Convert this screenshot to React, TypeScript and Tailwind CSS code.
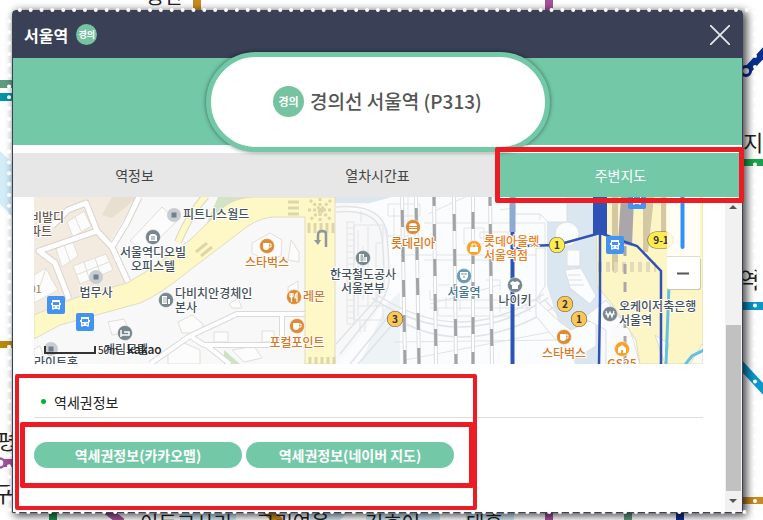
import { useState } from "react"
import type { ReactNode } from "react"

const FONT =
  "font-['Noto_Sans_CJK_KR','Noto_Sans',sans-serif]"

const TABS = [
  { id: "info", nome: "역정보" },
  { id: "time", nome: "열차시간표" },
  { id: "map", nome: "주변지도" },
]

const LINKS = [
  "역세권정보(카카오맵)",
  "역세권정보(네이버 지도)",
]

const TRILHOS = [
  [402, 405, 22],
  [416, 419, 24],
  [434, 436, 8],
  [454, 456, 18],
  [473, 473, 20],
  [490, 492, 8],
]

/* LINE MAP BEHIND THE POPUP */
function LineMap() {
  return (
    <svg
      className="absolute top-0 left-0"
      width="763"
      height="520"
      viewBox="0 0 763 520"
      fill="#222"
      fontSize="18"
      aria-hidden="true"
    >
      <rect x="193" y="0" width="8" height="12" fill="#c98b1e" />
      <rect x="545" y="0" width="8" height="12" fill="#a2529b" />
      <text x="146" y="4" fontSize="20">용산</text>

      <path d="M0 151L14 164V218L0 204Z" fill="#d2ecf8" />
      <rect x="0" y="80" width="14" height="8" fill="#5f9b80" />
      <rect x="0" y="93" width="14" height="8" fill="#0593a7" />
      <rect x="0" y="341" width="14" height="7" fill="#b9870c" />
      <text x="-3" y="449" fontSize="21">평</text>
      <path d="M0 463H14" stroke="#a2529b" strokeWidth="8" />
      <circle cx="0" cy="463" r="4.500" fill="#fff" stroke="#a2529b" strokeWidth="2.500" />
      <text x="-7" y="502" fontSize="22">구</text>

      <path d="M744 74L766 50" stroke="#0a2e90" strokeWidth="8" />
      <circle cx="746" cy="71" r="4.500" fill="#fff" stroke="#0a2e90" strokeWidth="3" />
      <text x="743" y="151" fontSize="22">지도</text>
      <rect x="740" y="159" width="23" height="7" fill="#17a54a" />
      <text x="739" y="288" fontSize="22">역</text>
      <rect x="740" y="302" width="23" height="8" fill="#0b97cb" />
      <path d="M740 364L766 392" stroke="#0b97cb" strokeWidth="8" />
      <rect x="740" y="497" width="23" height="7" fill="#c98b1e" />

      <path d="M180 510H236V520H180ZM310 510H350L340 520H310ZM366 510H440V520H366ZM466 510H514V520H466Z" fill="#cfe8f3" />
      <rect x="49" y="510" width="8" height="10" fill="#1e8e49" />
      <path d="M106 510L122 522" stroke="#a2529b" strokeWidth="8" />
      <path d="M266 510L280 522" stroke="#c98b1e" strokeWidth="9" />
      <rect x="545" y="510" width="8" height="10" fill="#a2529b" />
      <rect x="624" y="510" width="8" height="10" fill="#5f9b80" />
      <rect x="676" y="510" width="8" height="10" fill="#0a2e90" />
      <text x="140" y="531" fontSize="20">이득교사리</text>
      <text x="256" y="530" fontSize="20">그리여웅</text>
      <text x="365" y="531" fontSize="20">김호어</text>
      <text x="466" y="531" fontSize="20">대흥</text>
    </svg>
  )
}

function Bus({ x, y }: { x: number; y: number }) {
  return (
    <g transform={`translate(${x} ${y})`}>
      <rect x="-9" y="-9" width="18" height="18" rx="2" fill="#4294f0" />
      <path d="M-4 -5H4V4H-4Z" fill="#fff" />
      <path d="M-3 -3H3V0H-3Z" fill="#4294f0" />
      <path d="M-4.500 -2V0M4.500 -2V0M-3 4V5M3 4V5" stroke="#fff" />
      <path d="M-3 2H-1M1 2H3" stroke="#4294f0" />
    </g>
  )
}

function Pin({
  x,
  y,
  cor = "#78868d",
  children,
}: {
  x: number
  y: number
  cor?: string
  children?: ReactNode
}) {
  return (
    <g transform={`translate(${x} ${y})`}>
      <circle r="7.500" fill={cor} stroke="#fff" strokeWidth="0.500" />
      {children}
    </g>
  )
}

function Ponto({ x, y }: { x: number; y: number }) {
  return (
    <g transform={`translate(${x} ${y})`}>
      <circle r="7" fill="#c9ccd2" />
      <rect x="-2.500" y="-2.500" width="5" height="5" fill="#71808a" />
    </g>
  )
}

function Copo() {
  return (
    <g>
      <path d="M-4 -3H2V1Q2 4 -1 4Q-4 4 -4 1Z" fill="#fff" />
      <path d="M2 -2H4V1H2" fill="none" stroke="#fff" />
    </g>
  )
}

function Saida({
  x,
  y,
  n,
  cor = "#fcc755",
}: {
  x: number
  y: number
  n: string
  cor?: string
}) {
  return (
    <g>
      <circle cx={x} cy={y} r="7.500" fill={cor} stroke="#6b6146" strokeWidth="1.200" />
      <text x={x} y={y + 4} textAnchor="middle" fontSize="10" fontWeight="700" fill="#333" strokeWidth="0">
        {n}
      </text>
    </g>
  )
}

/* MAP AROUND THE STATION */
function StationMap() {
  return (
    <svg
      className="block h-[167px] w-full"
      viewBox="34 197 669 167"
      preserveAspectRatio="xMidYMid slice"
      role="img"
      aria-label="주변지도"
    >
      <rect x="34" y="197" width="669" height="167" fill="#f8f8f9" />

      {/* blocks */}
      <path d="M34 197H138L110 242L130 284L70 301L34 316Z" fill="#f3ebe0" />
      <path d="M102 215L112 197H138L122 210L112 218Z" fill="#e9dfd0" />
      <path d="M204 230L218 197H258L236 205Z" fill="#d3e4c6" />
      <path d="M224 350L240 364H224Z" fill="#cfe3c3" />
      <path d="M335 197H392V246L380 212L366 203H335Z" fill="#dbe7ef" />
      <g fill="#fcfcfc" stroke="#e4ded6">
        <path d="M67 222L84 211L91 226L73 237ZM56 249L72 240L78 256L62 267ZM73 266L106 254L113 270L80 284ZM84 262L90 281M95 258L101 276M76 275L109 262M34 275L46 268L52 280L58 290L34 303Z" />
        <path d="M75 217L81 231M64 245L70 261M46 268L38 292" />
        <path d="M130 241L162 207L177 221L145 252Z" />
        <path d="M252 243L270 233L282 240L281 256L263 259L252 253ZM291 240L299 252V262L288 260ZM288 287L298 281V300H288Z" />
        <path d="M178 322L192 315L203 324V333H182ZM214 332H228V342H214ZM262 331H274V342H262ZM229 304L238 298L242 308L232 308ZM108 322L124 319L130 332L112 335Z" />
        <path d="M34 349L40 346L46 364H34ZM168 352L182 342L200 350V364H168ZM232 350L254 346L262 358L244 362Z" />
      </g>

      {/* side roads */}
      <g fill="none" strokeLinejoin="round">
        <path d="M52 226L68 210L86 203L97 231L39 251L55 263L69 299M97 231L112 247L128 282M112 247L126 224L139 197" stroke="#d8d4ce" strokeWidth="7" />
        <path d="M52 226L68 210L86 203L97 231L39 251L55 263L69 299M97 231L112 247L128 282M112 247L126 224L139 197" stroke="#fff" strokeWidth="5" />
        <path d="M150 364L190 336L237 314H307M190 336L204 345H307M282 314V345M206 345L230 364" stroke="#d9dadd" strokeWidth="6" />
        <path d="M150 364L190 336L237 314H307M190 336L204 345H307M282 314V345M206 345L230 364" stroke="#fff" strokeWidth="4" />
        <path d="M178 242Q192 210 206 196" stroke="#dad8c0" strokeWidth="8" />
        <path d="M178 242Q192 210 206 196" stroke="#fdf8c6" strokeWidth="6" />
      </g>

      {/* main roads */}
      <path
        d="M34 315L75 298L127 283Q160 264 190 240L225 206Q236 198 252 197H335V364H305V217H275Q262 217 248 226L190 270Q158 296 140 303L60 325L34 339Z"
        fill="#fdf8c6"
        stroke="#e0dcc0"
      />
      <g stroke="#ded6ab" strokeWidth="3" fill="none">
        <path d="M288 202H299M288 208H299M288 214H299M309 223V233M315 223V233M321 223V233M327 223V233M333 223V233" />
        <path d="M310 200L331 220M331 200L310 220M308 210H333M320 198V222" strokeDasharray="3 2" />
        <path d="M310 357V364M316 357V364M322 357V364M328 357V364M334 357V364" />
        <path d="M196 252L207 243M201 256L212 247" />
      </g>
      <path d="M326 247V234Q326 231 322 231Q318 231 318 235V241" fill="none" stroke="#92969a" strokeWidth="2.500" />
      <path d="M314 240H321L318 245Z" fill="#92969a" />

      {/* rail yard */}
      <path d="M336 212Q382 203 389 236V284Q386 310 336 364H600V197H392Z" fill="#fbfcfd" />
      <path d="M505 197H600V364H575L558 320L547 286V218Z" fill="#dbe7f0" />
      <path d="M505 197H547V286L512 300Z" fill="#fbfcfd" />
      <path d="M386 305L400 292V364H360Z" fill="#eef3f6" />
      <g fill="none" stroke="#e1e4e7">
        <path d="M336 207Q372 204 383 222Q389 232 389 282Q387 296 375 310L340 354M336 212Q370 209 379 226Q384 236 384 284Q382 294 372 304L336 344M350 364L392 312M358 364L400 316" strokeWidth="1.500" />
        <path d="M347 222H354V324H347ZM347 228H354M347 234H354M347 240H354M347 246H354M347 252H354M347 258H354M347 264H354M347 270H354M347 276H354M347 282H354M347 288H354M347 294H354M347 300H354M347 306H354M347 312H354M347 318H354" />
        <path d="M354 225H383V243H376V306H383V320H354ZM358 230V316M368 226V306M363 246V300M358 306H378M360 320V332M365 320V332M361 211V222" />
        <path d="M388 204H420V216H388ZM394 208V238M408 197V236H388M424 223H545V250M424 260H500M430 290V300H540V280M430 308H530V300M438 308V316H520M464 228H484V244H464Z" />
        <path d="M428 214L476 192M430 304L500 285M394 342L560 340M400 255H540M405 360L560 330M500 210L540 204V220" />
        <path d="M372 298Q460 356 548 298M376 294Q460 350 544 294M398 320Q470 360 556 306M545 300L590 350M550 296L596 342" strokeWidth="1.500" />
        <path d="M446 297V308M460 300V311M500 300V312M524 302L530 312M438 285H450M480 232H508V238H480ZM486 280H500V290" />
      </g>
      {TRILHOS.map(([x1, x2, off]) => (
        <g key={x1} fill="none">
          <path d={`M${x1} 197L${x2} 364`} stroke="#dcdee0" strokeWidth="4" />
          <path d={`M${x1} 197L${x2} 364`} stroke="#fff" strokeWidth="2" />
          <path
            d={`M${x1} 197L${x2} 364`}
            stroke="#a2a3a5"
            strokeWidth="3"
            strokeDasharray="17 18"
            strokeDashoffset={off}
          />
        </g>
      ))}

      {/* square in front of the station */}
      <g fill="#fbfcfd" stroke="#dcdfe2">
        <path d="M515 197H567V222H548L540 214H515ZM567 250H580V266H567ZM565 270L581 268L596 296L590 304L570 288ZM568 275H580M568 280H582M568 285H584" />
        <circle cx="567" cy="234" r="12" />
        <path d="M545 248V286L536 300L560 322L571 330L596 318V346L580 356L556 340L536 316V248Z" />
        <path d="M584 318L606 300L630 330L640 364H606V330Z" />
      </g>

      {/* avenue on the right */}
      <path d="M596 197H703V364H640L636 340L612 304L597 286Z" fill="#fcf6c6" stroke="#e3dcb8" />
      <path d="M611 326V364H638L633 340L622 322Z" fill="#fafafa" />
      <path d="M655 335L669 344L665 364ZM690 364L703 343V364Z" fill="#fbfbfb" stroke="#e3dcb8" />
      <g fill="#d3c8a2">
        <path d="M612 197H618V270Q615 276 612 270ZM643 197H654L648 252H643ZM661 197H666V246H661Z" />
      </g>
      <path d="M621 197H634L632 246L618 243Z" fill="#aaa6a9" />
      <path d="M598 267H656" stroke="#e2dab8" strokeWidth="10" strokeDasharray="4 4" />
      <path d="M625 246V364" stroke="#aaa6a9" strokeWidth="3" strokeDasharray="10 8" />
      <path d="M669 285L666 364M684 366L692 356L704 350" fill="none" stroke="#63c1e6" strokeWidth="3" />

      {/* subway lines */}
      <g fill="none" stroke="#2f52b8">
        <path d="M512.500 197V232" stroke="#8ea9d2" strokeWidth="6" />
        <path d="M512.500 232V364" strokeWidth="4" />
        <path d="M512 250L524 246L557 245L600 233L637 246L661 271V364M600 233V300L599 364" strokeWidth="2.500" />
        <path d="M600 197V234" strokeWidth="14" />
      </g>

      <Bus x={56} y={305} />
      <Bus x={85} y={322} />
      <Bus x={615} y={245} />
      <Bus x={637} y={200} />

      {/* places */}
      <Ponto x={174} y={215} />
      <Ponto x={96} y={277} />
      <Ponto x={51} y={349} />
      <Pin x={153} y={237}>
        <path d="M-4 4V-1L-2 -3H2L4 -1V4Z" fill="#fff" />
        <path d="M-2 0H2M-2 2H2" stroke="#78868d" />
      </Pin>
      <Pin x={166} y={300}>
        <path d="M-4 4V-4H1V4ZM2 4V-1H4V4Z" fill="#fff" />
        <path d="M-2 -3V3M0 -3V3" stroke="#78868d" strokeWidth="0.700" />
      </Pin>
      <Pin x={125} y={333}>
        <path d="M-4 -3V4M-4 2H4V-1H-1" fill="none" stroke="#fff" strokeWidth="1.500" />
      </Pin>
      <Pin x={267} y={246} cor="#dd8c35"><Copo /></Pin>
      <Pin x={294} y={297} cor="#dd8c35">
        <path d="M-4 -4V-1Q-4 0 -2.500 0Q-1 0 -1 -1V-4M-2.500 -4V5M3 5V-4Q1 -3 1 1H3" fill="none" stroke="#fff" strokeWidth="1.200" />
      </Pin>
      <Pin x={297} y={326} cor="#dd8c35"><Copo /></Pin>
      <Pin x={363} y={258}>
        <path d="M-4 4V-4H1V-1H4V4Z" fill="#fff" />
        <path d="M-3 -2H0M-3 0H3M-3 2H3M-1 -4V4" stroke="#78868d" strokeWidth="0.700" />
      </Pin>
      <Pin x={413} y={227} cor="#dd8c35">
        <path d="M-4 -1Q-4 -4 0 -4Q4 -4 4 -1ZM-4 0H4V1H-4ZM-4 2H4V4H-4Z" fill="#fff" />
      </Pin>
      <Pin x={474} y={248} cor="#f5a32d">
        <path d="M-4 -1H4V4H-4Z" fill="#fff" />
        <path d="M-2 -1V-4H2V-1" fill="none" stroke="#fff" />
      </Pin>
      <Pin x={464} y={276} cor="#6a9db4">
        <path d="M-4 -4H4V1L2 4H-2L-4 1Z" fill="#fff" />
        <path d="M-3 -2H3M-1 1H1" stroke="#6a9db4" />
      </Pin>
      <Pin x={515} y={285}>
        <path d="M-2 -4Q0 -2 2 -4L5 -2L4 0L3 0V4H-3V0H-4L-5 -2Z" fill="#fff" />
      </Pin>
      <Pin x={564} y={337} cor="#dd8c35"><Copo /></Pin>
      <Pin x={610} y={314}>
        <path d="M-4 -3L-2 3L0 -2L2 3L4 -3M-5 0H5" fill="none" stroke="#fff" strokeWidth="1.200" />
      </Pin>
      <Pin x={622} y={349} cor="#f5a32d">
        <path d="M-4 4V-1L0 -4L4 -1V4H1V1H-1V4Z" fill="#fff" />
      </Pin>

      {/* labels */}
      <g
        fontSize="12"
        fontWeight="500"
        stroke="#fff"
        strokeWidth="2"
        paintOrder="stroke"
        strokeLinejoin="round"
        fill="#45525b"
      >
        <text x="31" y="222" fill="#6b5a50">비발디</text>
        <text x="30" y="236" fill="#6b5a50">파트</text>
        <text x="30" y="293" fontSize="10" fill="#a58a5a">01</text>
        <text x="183" y="219">피트니스월드</text>
        <text x="153" y="257" textAnchor="middle">서울역디오빌</text>
        <text x="153" y="271" textAnchor="middle">오피스텔</text>
        <text x="96" y="297" textAnchor="middle">법무사</text>
        <text x="175" y="298">다비치안경체인</text>
        <text x="175" y="312">본사</text>
        <text x="126" y="354" textAnchor="middle">계림모텔</text>
        <text x="34" y="367">라이트홈</text>
        <text x="363" y="279" textAnchor="middle">한국철도공사</text>
        <text x="363" y="293" textAnchor="middle">서울본부</text>
        <text x="515" y="305" textAnchor="middle">나이키</text>
        <text x="619" y="311">오케이저축은행</text>
        <text x="619" y="325">서울역</text>
        <text x="464" y="297" textAnchor="middle" fill="#44788f">서울역</text>
        <g fill="#d87722">
          <text x="267" y="267" textAnchor="middle">스타벅스</text>
          <text x="303" y="301">레몬</text>
          <text x="297" y="347" textAnchor="middle">포컬포인트</text>
          <text x="413" y="248" textAnchor="middle">롯데리아</text>
          <text x="484" y="246" fill="#ee7d20">롯데아울렛</text>
          <text x="484" y="260" fill="#ee7d20">서울역점</text>
          <text x="564" y="358" textAnchor="middle">스타벅스</text>
          <text x="622" y="368" textAnchor="middle">GS25</text>
        </g>
        <Saida x={395} y={319} n="3" />
        <Saida x={557} y={245} n="1" cor="#fdec4f" />
        <Saida x={565} y={304} n="2" />
        <Saida x={579} y={319} n="1" />
        <rect x="648" y="232" width="25" height="16" rx="8" fill="#fdec4f" stroke="#6b6146" strokeWidth="1.200" />
        <text x="661" y="244" textAnchor="middle" fontSize="10" fontWeight="700" fill="#333" strokeWidth="0">9-1</text>
      </g>

      {/* scale */}
      <path d="M45 346V353H95V346" fill="none" stroke="#333" strokeWidth="2" />
      <text x="98" y="354" fontSize="10" fill="#222">50m</text>
      <text x="127" y="354" fontSize="12" fontWeight="500" fill="#222">kakao</text>

      {/* zoom control */}
      <rect x="667" y="197" width="33" height="60" fill="#fff" fillOpacity="0.800" />
      <path d="M682.500 197V247" stroke="#3290fa" strokeWidth="4" strokeLinecap="round" />
      <rect x="667" y="258" width="34" height="32" rx="2" fill="#ccc8ad" />
      <rect x="667" y="257" width="33" height="32" rx="2" fill="#fff" />
      <path d="M667 256.500H700" stroke="#deddd4" />
      <path d="M677 273.500H689" stroke="#555" strokeWidth="2" />
    </svg>
  )
}

export default function App() {
  const [aba, setAba] =
    useState("map")

  return (
    <div className={`relative flex min-h-screen overflow-hidden bg-white pt-[10px] pr-5 pb-[7px] pl-3 ${FONT}`}>
      <LineMap />

      <main className="relative flex flex-1 flex-col rounded-t border border-[#3a4055] bg-white shadow-[3px_2px_9px_1px_rgba(0,0,0,0.7)]">

        <header className="flex h-[47px] items-center gap-2 bg-[#3a4055] pr-3 pl-[11px]">
          <h1 className="text-base font-bold text-white">서울역</h1>
          <span className="flex size-[21px] items-center justify-center rounded-full bg-[#75c3a1] text-[9px] font-bold text-white">
            경의
          </span>
          <button className="ml-auto" aria-label="닫기">
            <svg width="20" height="20" viewBox="0 0 20 20">
              <path d="M0 0L20 20M20 0L0 20" stroke="#e6e7ea" strokeWidth="1.800" />
            </svg>
          </button>
        </header>

        <div className="flex h-[87px] items-center justify-center bg-[#73c8a8]">
          <div className="relative z-10 flex h-[100px] w-[344px] shrink-0 items-center justify-center gap-1.5 rounded-full border-5 border-[#73c8a8] bg-white shadow-[0_0_4px_rgba(0,0,0,0.5)]">
            <span className="flex size-[31px] items-center justify-center rounded-full bg-[#75c3a1] text-[11px] font-bold text-white">
              경의
            </span>
            <h2 className="text-[19px] font-medium text-[#555]">
              경의선 서울역 (P313)
            </h2>
          </div>
        </div>

        {/* TABS */}
        <nav className="mt-2 flex">
          {TABS.map((t) => (
            <button
              key={t.id}
              className={`relative h-11 flex-1 text-sm ${
                aba === t.id
                  ? "bg-[#73c8a8] text-white"
                  : "bg-[#e7e7e7] text-[#444]"
              }`}
              onClick={() => setAba(t.id)}
            >
              {t.nome}
              {t.id === "map" && (
                <span className="pointer-events-none absolute -inset-y-1.5 -right-0.5 -left-1 z-20 rounded-xs border-5 border-[#ed1c24]" />
              )}
            </button>
          ))}
        </nav>

        <div className="flex flex-1">
          <div className="flex-1 pr-[22px] pl-[21px]">
            <StationMap />

            <section className="relative pt-[22px]">
              <h3 className="flex h-8 items-center gap-2 border-b border-[#ddd] pl-[7px] text-sm text-[#222]">
                <span className="size-[5px] rounded-full bg-[#00b52e]" />
                역세권정보
              </h3>
              <div className="mt-6 flex gap-1">
                {LINKS.map((nome) => (
                  <a
                    key={nome}
                    href="#"
                    className="flex h-[26px] w-[208px] items-center justify-center rounded-full bg-[#73c8a8] text-sm font-bold text-white"
                  >
                    {nome}
                  </a>
                ))}
              </div>
              <div className="pointer-events-none absolute top-[10px] -left-[19px] h-[136px] w-[462px] rounded-xs border-4 border-[#ed1c24]" />
              <div className="pointer-events-none absolute top-[58px] -left-[14px] h-[66px] w-[454px] rounded-xs border-5 border-[#ed1c24]" />
            </section>
          </div>

          {/* SCROLLBAR */}
          <div className="flex w-[17px] flex-col items-center bg-[#f1f1f1]">
            <svg className="h-[18px] w-full" viewBox="0 0 17 18">
              <path d="M4 12L8 8L12 12Z" fill="#555" />
            </svg>
            <div className="flex w-full flex-1 items-end px-px">
              <div className="h-3/5 w-full bg-[#c1c1c1]" />
            </div>
            <svg className="h-[21px] w-full" viewBox="0 0 17 21">
              <path d="M4 8L8 12L12 8Z" fill="#555" />
            </svg>
          </div>
        </div>
      </main>

      {/* dotted selection frame */}
      <div className="pointer-events-none absolute top-[10px] right-2 bottom-2 left-[9px]">
        <svg className="size-full overflow-visible" aria-hidden="true">
          <rect
            width="100%"
            height="100%"
            fill="none"
            stroke="#fff"
            strokeWidth="4"
            strokeLinecap="round"
            strokeDasharray="0 10.850"
          />
        </svg>
      </div>
    </div>
  )
}
